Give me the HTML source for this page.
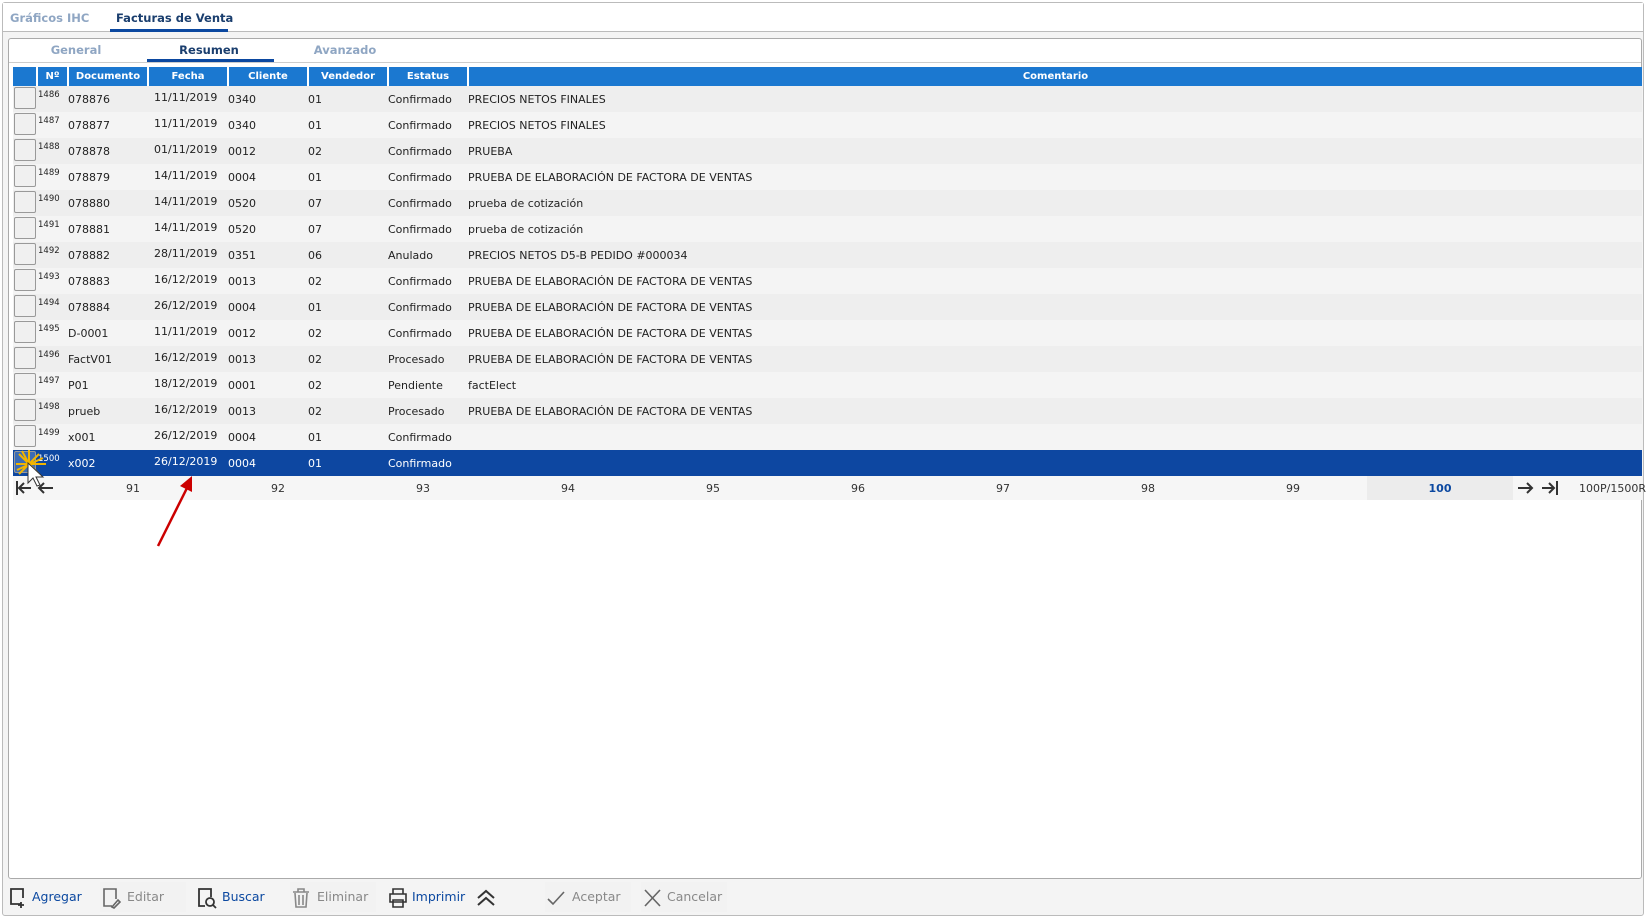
<!DOCTYPE html>
<html><head><meta charset="utf-8">
<style>
*{margin:0;padding:0;box-sizing:border-box}
body{width:1646px;height:918px;background:#fff;font-family:"DejaVu Sans","Liberation Sans",sans-serif;font-size:11px;color:#222;position:relative;overflow:hidden}
.abs{position:absolute}
.outer{left:2px;top:2px;width:1642px;height:914px;border:1px solid #bbb;border-radius:3px;background:#f4f4f4}
.tabbar{left:3px;top:3px;width:1640px;height:29px;background:#fff;border-bottom:1px solid #bbb}
.tab{position:absolute;top:8px;font-weight:bold;font-size:11.5px}
.inner{left:8px;top:38px;width:1634px;height:841px;border:1px solid #aaa;border-radius:3px;background:#fff}
.sub{position:absolute;top:4px;font-weight:bold;font-size:11.5px;text-align:center}
.hdr{left:13px;top:67px;width:1629px;height:19px;background:#1b78d0;color:#fff;font-weight:bold;font-size:10px}
.hdr div{position:absolute;top:0;height:19px;line-height:19px;text-align:center;border-left:2px solid #fff}
.row{position:absolute;left:13px;width:1629px;height:26px}
.row span{position:absolute;top:7px;white-space:nowrap}
.row .n{font-size:8.5px;top:4px}
.cb{position:absolute;left:1px;top:1px;width:22px;height:22px;border:1px solid #999;border-radius:2px;background:#f0f0f0}
.pg{left:13px;top:476px;width:1629px;height:24px;background:#f6f6f6}
.pg span{position:absolute;top:6px;width:40px;text-align:center;margin-left:-20px;color:#333}
.tb{position:absolute;top:882px;height:30px;line-height:30px;font-size:12.5px}
.tb svg{position:absolute;left:0;top:5px}
</style></head><body>
<div class="abs outer"></div>
<div class="abs tabbar">
 <div class="tab" style="left:7px;color:#8fa6c3">Gráficos IHC</div>
 <div class="tab" style="left:113px;color:#1a3e6e">Facturas de Venta</div>
 <div style="position:absolute;left:107px;top:26px;width:118px;height:3px;background:#0b48a0"></div>
</div>
<div class="abs inner">
 <div class="sub" style="left:32px;width:70px;color:#8fa6c3">General</div>
 <div class="sub" style="left:140px;width:120px;color:#1a3e6e">Resumen</div>
 <div style="position:absolute;left:138px;top:20px;width:127px;height:3px;background:#0b48a0"></div>
 <div class="sub" style="left:296px;width:80px;color:#8fa6c3">Avanzado</div>
 <div style="position:absolute;left:0;top:23px;width:1632px;height:1px;background:#ccc"></div>
</div>
<div class="abs hdr">
 <div style="left:23px;width:31px">Nº</div>
 <div style="left:54px;width:80px">Documento</div>
 <div style="left:134px;width:80px">Fecha</div>
 <div style="left:214px;width:80px">Cliente</div>
 <div style="left:294px;width:80px">Vendedor</div>
 <div style="left:374px;width:80px">Estatus</div>
 <div style="left:454px;width:1175px">Comentario</div>
</div>
<div id="rows"></div>
<script>
var d=[["1486","078876","11/11/2019","0340","01","Confirmado","PRECIOS NETOS FINALES"],
["1487","078877","11/11/2019","0340","01","Confirmado","PRECIOS NETOS FINALES"],
["1488","078878","01/11/2019","0012","02","Confirmado","PRUEBA"],
["1489","078879","14/11/2019","0004","01","Confirmado","PRUEBA DE ELABORACIÓN DE FACTORA DE VENTAS"],
["1490","078880","14/11/2019","0520","07","Confirmado","prueba de cotización"],
["1491","078881","14/11/2019","0520","07","Confirmado","prueba de cotización"],
["1492","078882","28/11/2019","0351","06","Anulado","PRECIOS NETOS D5-B PEDIDO #000034"],
["1493","078883","16/12/2019","0013","02","Confirmado","PRUEBA DE ELABORACIÓN DE FACTORA DE VENTAS"],
["1494","078884","26/12/2019","0004","01","Confirmado","PRUEBA DE ELABORACIÓN DE FACTORA DE VENTAS"],
["1495","D-0001","11/11/2019","0012","02","Confirmado","PRUEBA DE ELABORACIÓN DE FACTORA DE VENTAS"],
["1496","FactV01","16/12/2019","0013","02","Procesado","PRUEBA DE ELABORACIÓN DE FACTORA DE VENTAS"],
["1497","P01","18/12/2019","0001","02","Pendiente","factElect"],
["1498","prueb","16/12/2019","0013","02","Procesado","PRUEBA DE ELABORACIÓN DE FACTORA DE VENTAS"],
["1499","x001","26/12/2019","0004","01","Confirmado",""],
["1500","x002","26/12/2019","0004","01","Confirmado",""]];
var h="";
d.forEach(function(r,i){
 var sel=i==14;
 var bg=sel?"#0d47a1":(i%2?"#f4f4f4":"#eeeeee");
 var c=sel?"color:#fff;":"";
 h+='<div class="row" style="top:'+(86+i*26)+'px;background:'+bg+';'+c+'"><div class="cb"'+(sel?' style="background:#3c6cb4"':'')+'></div>'+
 '<span class="n" style="left:25px">'+r[0]+'</span><span style="left:55px">'+r[1]+'</span><span style="left:141px;top:5px">'+r[2]+'</span><span style="left:215px">'+r[3]+'</span><span style="left:295px">'+r[4]+'</span><span style="left:375px">'+r[5]+'</span><span style="left:455px">'+r[6]+'</span></div>';
});
document.getElementById("rows").innerHTML=h;
</script>
<div class="abs pg">
 <div style="position:absolute;left:1354px;top:0;width:146px;height:24px;background:#ececec"></div>
 <span style="left:120px">91</span><span style="left:265px">92</span><span style="left:410px">93</span><span style="left:555px">94</span><span style="left:700px">95</span><span style="left:845px">96</span><span style="left:990px">97</span><span style="left:1135px">98</span><span style="left:1280px">99</span><span style="left:1427px;color:#0b48a0;font-weight:bold">100</span>
 <svg style="position:absolute;left:2px;top:4px" width="44" height="16" viewBox="0 0 44 16" fill="none" stroke="#333" stroke-width="2"><path d="M2 1v14M16 8H4M9 3L4 8l5 5M38 8H24M29 3l-5 5 5 5"/></svg>
 <svg style="position:absolute;left:1503px;top:4px" width="44" height="16" viewBox="0 0 44 16" fill="none" stroke="#333" stroke-width="2"><path d="M2 8h14M11 3l5 5-5 5M26 8h12M33 3l5 5-5 5M41 1v14"/></svg>
 <span style="left:1596px;width:80px;margin-left:-30px;text-align:left">100P/1500R</span>
</div>
<svg class="abs" style="left:14px;top:448px" width="50" height="40" viewBox="0 0 50 40"><g stroke="#f0b400" stroke-width="2"><path d="M15 2v30M2 16h30M5 6l20 20M25 6L5 26M8 3l14 26M3 22l26-12"/></g><path d="M14 15v20l5-5 4 8 3-1-4-8h7z" fill="#fff" stroke="#333"/></svg>
<svg class="abs" style="left:150px;top:472px" width="50" height="80" viewBox="0 0 50 80"><path d="M8 74L38 14" stroke="#c00" stroke-width="2.5"/><path d="M42 4L30 14l12 6z" fill="#c00"/></svg>
<div class="tb" style="left:9px;width:75px;color:#0b48a0"><svg width="20" height="22" viewBox="0 0 20 22" fill="none" stroke="#333" stroke-width="1.8"><path d="M12 17H2V2h12v9M12 15v6M9 18h6"/></svg><span style="margin-left:23px">Agregar</span></div>
<div class="tb" style="left:100px;width:86px;background:#f2f2f2;color:#888"><svg width="22" height="22" viewBox="0 0 22 22" fill="none" stroke="#666" stroke-width="1.6"><path d="M12 19H4V2h12v10M12 20l6-7 2 2-6 6z"/></svg><span style="margin-left:27px">Editar</span></div>
<div class="tb" style="left:197px;width:70px;color:#0b48a0"><svg width="22" height="22" viewBox="0 0 22 22" fill="none" stroke="#333" stroke-width="1.8"><path d="M8 19H2V2h12v8"/><circle cx="13" cy="15" r="4"/><path d="M16 18l3 3"/></svg><span style="margin-left:25px">Buscar</span></div>
<div class="tb" style="left:290px;width:86px;background:#f2f2f2;color:#888"><svg width="22" height="22" viewBox="0 0 22 22" fill="none" stroke="#888" stroke-width="1.6"><path d="M3 5h16M8 5V2h6v3M5 6l1 14h10l1-14M9 8v10M13 8v10"/></svg><span style="margin-left:27px">Eliminar</span></div>
<div class="tb" style="left:387px;width:110px;color:#0b48a0"><svg width="22" height="22" viewBox="0 0 22 22" fill="none" stroke="#333" stroke-width="1.6"><path d="M6 7V2h10v5M3 7h16v8H3zM6 13h10v7H6z"/></svg><span style="margin-left:25px">Imprimir</span><svg style="left:88px;top:7px" width="22" height="18" viewBox="0 0 22 18" fill="none" stroke="#333" stroke-width="2"><path d="M3 9l8-7 8 7M3 16l8-7 8 7"/></svg></div>
<div class="tb" style="left:545px;width:86px;background:#f2f2f2;color:#888"><svg width="22" height="22" viewBox="0 0 22 22" fill="none" stroke="#666" stroke-width="1.6"><path d="M3 12l5 5L19 5"/></svg><span style="margin-left:27px">Aceptar</span></div>
<div class="tb" style="left:641px;width:86px;background:#f2f2f2;color:#888"><svg width="22" height="22" viewBox="0 0 22 22" fill="none" stroke="#666" stroke-width="1.6"><path d="M4 3l15 16M19 3L4 19"/></svg><span style="margin-left:26px">Cancelar</span></div>
</body></html>
